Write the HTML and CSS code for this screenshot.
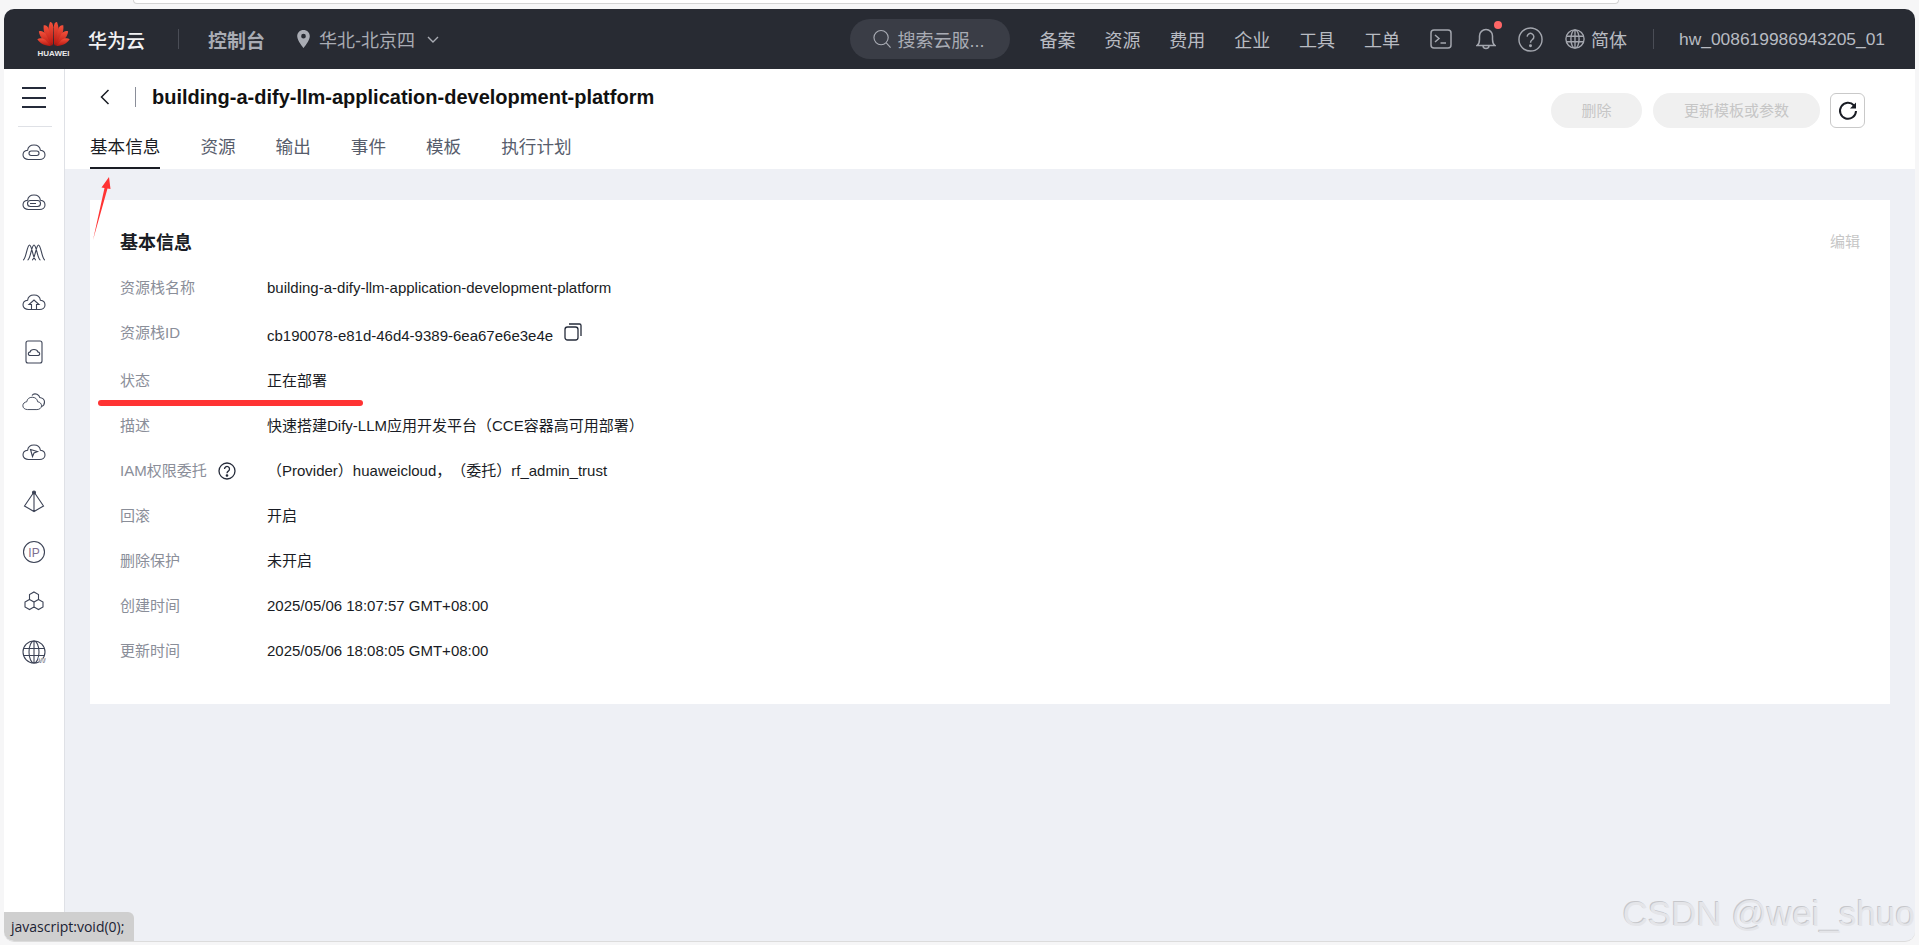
FILE: index.html
```html
<!DOCTYPE html>
<html lang="zh-CN">
<head>
  <meta charset="UTF-8" />
  <title>基本信息 - 资源栈</title>
  <link rel="stylesheet" href="styles.css">
</head>
<body>
  <svg class="defs" width="0" height="0">
    <symbol id="cloud" viewBox="0 0 24 24">
      <path d="M6.5 19.5C3.4 19.5 1 17.6 1 15s2-4.4 4.6-4.7C6 6.9 8.6 5 12 5s6 1.900 6.400 5.300C21 10.600 23 12.400 23 15s-2.400 4.500-5.500 4.500Z" />
    </symbol>
  </svg>

  <div class="topstrip"><div class="urlbar"></div></div>

  <div class="window">
    <header class="topnav">
      <div class="topnav-left">
        <div class="logo">
          <svg class="logo-mark" viewBox="0 0 32 24">
            <defs>
              <linearGradient id="petal" x1="0" y1="0" x2="0" y2="1">
                <stop offset="0" stop-color="#f5523c" />
                <stop offset="1" stop-color="#b5150f" />
              </linearGradient>
            </defs>
            <g fill="url(#petal)">
              <path d="M15.500 23.500C11 18 9.500 9 12.500 1 14.500 .5 15.500 3 15.800 6Z" />
              <path d="M16.500 23.500C21 18 22.500 9 19.500 1 17.500 .5 16.500 3 16.200 6Z" />
              <path d="M14.800 23.800C9.500 19 5.500 11 6.500 4 9 3.500 11 5.500 11.500 8Z" />
              <path d="M17.200 23.800C22.500 19 26.500 11 25.500 4 23 3.500 21 5.500 20.500 8Z" />
              <path d="M14.200 24C8 21 2.500 16 1.800 10 4 8.800 7 10.500 8.500 12.500Z" />
              <path d="M17.800 24C24 21 29.500 16 30.200 10 28 8.800 25 10.500 23.500 12.500Z" />
              <path d="M13.500 24.200C8 24 2.500 21.500 .3 17.500 2.500 15.800 6 16.500 8 18Z" />
              <path d="M18.500 24.200C24 24 29.500 21.500 31.700 17.500 29.500 15.800 26 16.500 24 18Z" />
            </g>
          </svg>
          <span class="logo-text">HUAWEI</span>
        </div>
        <span class="brand">华为云</span>
        <span class="nav-sep"></span>
        <span class="console">控制台</span>
        <span class="region">
          <svg class="pin" viewBox="0 0 14 20"><path d="M7 0C3 0 0 3 0 7c0 5 7 13 7 13s7-8 7-13c0-4-3-7-7-7Zm0 9.500A2.600 2.600 0 1 1 7 4.300a2.600 2.600 0 0 1 0 5.200Z" /></svg>
          华北-北京四
          <svg class="chevron" viewBox="0 0 12 7"><path d="M1 1l5 5 5-5" /></svg>
        </span>
      </div>
      <div class="topnav-right">
        <div class="search">
          <svg class="search-icon" viewBox="0 0 20 20"><circle cx="8.500" cy="8.500" r="7.500" /><path d="M14 14l4.500 5" /></svg>
          搜索云服...
        </div>
        <nav class="nav-links">
          <a>备案</a><a>资源</a><a>费用</a><a>企业</a><a>工具</a><a>工单</a>
        </nav>
        <svg class="tool terminal" viewBox="0 0 22 20"><rect x="1" y="1" width="20" height="18" rx="3" /><path d="M5 6l4 3.500L5 13M10.500 14H16" /></svg>
        <span class="bell">
          <svg class="tool bell-icon" viewBox="0 0 20 24"><path d="M1 18.500c2-1.500 2.500-3 2.500-6V9a6.500 6.500 0 0 1 13 0v3.500c0 3 .5 4.500 2.500 6ZM7 18.500a3 3 0 0 0 6 0" /></svg>
          <i class="badge"></i>
        </span>
        <svg class="tool help-icon" viewBox="0 0 26 26"><circle cx="13" cy="13" r="12" /><path d="M9.500 10a3.500 3.500 0 1 1 5.500 3c-1.500 1-2 1.800-2 3.500" /><circle cx="13" cy="19.500" r=".8" /></svg>
        <span class="lang">
          <svg class="tool globe" viewBox="0 0 22 22"><circle cx="11" cy="11" r="10" /><ellipse cx="11" cy="11" rx="4.500" ry="10" /><path d="M11 1v20M1.500 8h19M1.500 14h19" /></svg>
          简体
        </span>
        <span class="nav-sep"></span>
        <span class="user">hw_008619986943205_01</span>
      </div>
    </header>

    <div class="layout">
      <aside class="sidebar">
        <div class="hamburger"><span></span><span></span><span></span></div>
        <div class="side-divider"></div>
        <ul class="side-icons">
          <li><svg viewBox="0 0 24 24"><use href="#cloud" /><rect x="7" y="11" width="10" height="4.500" rx="2.200" /></svg></li>
          <li><svg viewBox="0 0 24 24"><use href="#cloud" /><rect x="5.500" y="10.500" width="13" height="6" rx="3" /><path d="M8 13.500h6" /></svg></li>
          <li><svg viewBox="0 0 24 24"><path d="M1 20C4 20 5 5 7.500 5S11 20 14 20M5.500 20C8.500 20 9.500 5 12 5S15.500 20 18.500 20M10 20C13 20 14 5 16.500 5S20 20 23 20" /></svg></li>
          <li><svg viewBox="0 0 24 24"><use href="#cloud" /><path d="M9.500 19v-4.500H7l5-4.500 5 4.500h-2.500V19" /></svg></li>
          <li><svg viewBox="0 0 24 24"><rect x="4" y="1" width="16" height="22" rx="2" /><path d="M8.500 15.500c-1.500 0-2.200-.8-2.200-1.800s.9-1.700 1.900-1.800C8.400 10.500 10 9.500 12 9.500s3.500 1 3.800 2.400c1 .1 1.900.8 1.900 1.800s-.8 1.800-2.200 1.800Z" /></svg></li>
          <li><svg viewBox="0 0 24 24"><path d="M10 5.500C11 4 13 3.500 15 4.200c1.500.6 2.500 2 2.800 3.300 2.500.4 4.700 2 4.700 4.500 0 2-1 3.800-3 4.500" /><use href="#cloud" transform="translate(0 3) scale(.85)" /></svg></li>
          <li><svg viewBox="0 0 24 24"><use href="#cloud" /><path d="M8.500 9.500l7 2-3.500 1.500-1.500 3.500Z" /></svg></li>
          <li><svg viewBox="0 0 24 24"><path d="M12 2L2.500 16 12 21.500 21.500 16ZM12 2v19.500" /><circle class="solid" cx="12" cy="2.500" r="1.500" /></svg></li>
          <li><svg viewBox="0 0 24 24"><circle cx="12" cy="12" r="10.500" /><text class="ip-text" x="12" y="16.500">IP</text></svg></li>
          <li><svg viewBox="0 0 24 24"><path d="M12 2l4.500 2.500v5L12 12 7.500 9.500v-5ZM7.500 9.500l4.500 2.500v5l-4.500 2.500L3 17v-5ZM16.500 9.500L21 12v5l-4.500 2.500L12 17v-5Z" /></svg></li>
          <li><svg viewBox="0 0 24 24"><circle cx="12" cy="12" r="11" /><ellipse cx="12" cy="12" rx="5" ry="11" /><path d="M12 1v22M1.500 8.500h21M1.500 15.500h21" /><text class="w-text" x="20" y="23">W</text></svg></li>
        </ul>
      </aside>

      <main class="main">
        <div class="page-head">
          <div class="page-head-left">
            <div class="title-row">
              <svg class="back" viewBox="0 0 10 16"><path d="M8.500 1L1.500 8l7 7" /></svg>
              <span class="title-sep"></span>
              <h1 class="title">building-a-dify-llm-application-development-platform</h1>
            </div>
            <div class="tabs">
              <a class="tab active">基本信息</a>
              <a class="tab">资源</a>
              <a class="tab">输出</a>
              <a class="tab">事件</a>
              <a class="tab">模板</a>
              <a class="tab">执行计划</a>
            </div>
          </div>
          <div class="actions">
            <button class="btn btn-small">删除</button>
            <button class="btn btn-wide">更新模板或参数</button>
            <button class="btn-refresh">
              <svg viewBox="0 0 20 20"><path d="M16 4.500A8 8 0 1 0 18 10" /><path class="solid" d="M18 1.500v6h-6Z" /></svg>
            </button>
          </div>
        </div>

        <section class="card">
          <div class="card-head">
            <h2 class="card-title">基本信息</h2>
            <a class="edit">编辑</a>
          </div>
          <div class="row"><span class="label">资源栈名称</span><span class="value">building-a-dify-llm-application-development-platform</span></div>
          <div class="row row-id">
            <span class="label">资源栈ID</span>
            <span class="value value-id">cb190078-e81d-46d4-9389-6ea67e6e3e4e
              <svg class="copy" viewBox="0 0 18 18"><rect x="1" y="4" width="13" height="13" rx="2.500" /><path d="M5 1h10.500A1.500 1.500 0 0 1 17 2.500V13" /></svg>
            </span>
          </div>
          <div class="row"><span class="label">状态</span><span class="value">正在部署</span></div>
          <div class="row"><span class="label">描述</span><span class="value">快速搭建Dify-LLM应用开发平台（CCE容器高可用部署）</span></div>
          <div class="row">
            <span class="label">IAM权限委托
              <svg class="q" viewBox="0 0 18 18"><circle cx="9" cy="9" r="8" /><path d="M6.500 7a2.500 2.500 0 1 1 3.800 2.100C9.300 9.800 9 10.300 9 11.300" /><circle class="solid" cx="9" cy="13.500" r=".7" /></svg>
            </span>
            <span class="value">（Provider）huaweicloud，（委托）rf_admin_trust</span>
          </div>
          <div class="row"><span class="label">回滚</span><span class="value">开启</span></div>
          <div class="row"><span class="label">删除保护</span><span class="value">未开启</span></div>
          <div class="row"><span class="label">创建时间</span><span class="value">2025/05/06 18:07:57 GMT+08:00</span></div>
          <div class="row"><span class="label">更新时间</span><span class="value">2025/05/06 18:08:05 GMT+08:00</span></div>
        </section>
      </main>
    </div>

    <div class="statusbar">javascript:void(0);</div>
    <div class="watermark">CSDN @wei_shuo</div>
  </div>

  <!-- red marks drawn on top of the screenshot -->
  <svg class="mark-arrow" viewBox="0 0 24 70"><path d="M1 66L12.500 14 9.500 13.500 17 3 18.500 15 15.500 14.500Z" /></svg>
  <div class="mark-line"></div>
</body>
</html>
```

FILE: styles.css
```css
* {
  box-sizing: border-box;
}

html, body {
  height: 100%;
}

body {
  margin: 0;
  position: relative;
  overflow: hidden;
  background: #f6f6f7;
  font-family: "Liberation Sans", "Noto Sans CJK SC", sans-serif;
  color: #191c24;
  text-spacing-trim: space-all;
}

.defs {
  position: absolute;
}

.topstrip {
  height: 9px;
  padding: 0 300px 0 133px;
}

.urlbar {
  height: 4px;
  background: #fff;
  border: 1px solid #d4d4d4;
  border-top: none;
  border-radius: 0 0 8px 8px;
}

.window {
  position: relative;
  height: 933px;
  margin: 0 4px;
  display: flex;
  flex-direction: column;
  overflow: hidden;
  background: #eef0f5;
  border-bottom: 1px solid #dcdcdc;
  border-radius: 10px;
}

/* top bar */
.topnav {
  height: 60px;
  flex: none;
  display: flex;
  align-items: center;
  justify-content: space-between;
  padding: 0 30px 0 33px;
  background: #282b33;
  color: #b8bbc2;
}

.topnav-left, .topnav-right {
  display: flex;
  align-items: center;
}

.logo {
  width: 33px;
  display: flex;
  flex-direction: column;
  align-items: center;
  margin-top: 1px;
}

.logo-mark {
  width: 33px;
  height: 25px;
}

.logo-text {
  margin-top: 3px;
  font-size: 8px;
  line-height: 9px;
  font-weight: bold;
  color: #e8e8ea;
}

.brand {
  margin-left: 18px;
  font-size: 19px;
  font-weight: 500;
  color: #f2f2f4;
}

.nav-sep {
  width: 1px;
  height: 20px;
  background: #4a4d56;
}

.topnav-left .nav-sep {
  margin: 0 29px 0 33px;
}

.console {
  font-size: 19px;
  font-weight: bold;
  color: #a9acb4;
}

.region {
  margin-left: 32px;
  display: flex;
  align-items: center;
  font-size: 18px;
  color: #a9acb4;
}

.pin {
  width: 13px;
  height: 18px;
  margin-right: 9px;
  fill: #a9acb4;
}

.chevron {
  width: 12px;
  height: 7px;
  margin-left: 12px;
  fill: none;
  stroke: #a9acb4;
  stroke-width: 1.4;
}

.search {
  width: 160px;
  height: 40px;
  margin-right: 30px;
  padding-left: 23px;
  display: flex;
  align-items: center;
  border-radius: 20px;
  background: #3a3d46;
  font-size: 18px;
  color: #a9acb4;
}

.search-icon {
  width: 19px;
  height: 20px;
  margin-right: 6px;
  fill: none;
  stroke: #a9acb4;
  stroke-width: 1.2;
}

.nav-links {
  display: flex;
  gap: 28.900px;
  font-size: 18px;
}

.tool {
  fill: none;
  stroke: #a3a6ae;
  stroke-width: 1.500;
}

.terminal {
  width: 22px;
  height: 20px;
  margin-left: 30px;
}

.bell {
  position: relative;
  margin-left: 24px;
  display: flex;
}

.bell-icon {
  width: 20px;
  height: 24px;
}

.badge {
  position: absolute;
  top: -6px;
  right: -6px;
  width: 8px;
  height: 8px;
  border-radius: 50%;
  background: #f66;
}

.help-icon {
  width: 25px;
  height: 25px;
  margin-left: 22px;
}

.lang {
  margin-left: 22px;
  display: flex;
  align-items: center;
  font-size: 18px;
}

.globe {
  width: 20px;
  height: 20px;
  margin-right: 6px;
}

.topnav-right .nav-sep {
  margin: 0 25px 0 26px;
}

.user {
  font-size: 17.400px;
}

/* sidebar and content */
.layout {
  flex: 1;
  display: flex;
  min-height: 0;
}

.sidebar {
  width: 61px;
  flex: none;
  padding-left: 1px;
  background: #fff;
  border-right: 1px solid #dfe1e6;
}

.hamburger {
  display: flex;
  flex-direction: column;
  gap: 7.500px;
  width: 24px;
  margin: 18px 0 0 17px;
}

.hamburger span {
  height: 2px;
  background: #252b3a;
}

.side-divider {
  width: 34px;
  height: 1px;
  margin: 18px 0 0 13px;
  background: #dfe1e6;
}

.side-icons {
  list-style: none;
  margin: 0;
  padding: 0;
}

.side-icons li {
  height: 50px;
  display: flex;
  align-items: center;
  padding-left: 17px;
}

.side-icons svg {
  width: 24px;
  height: 24px;
  fill: none;
  stroke: #3c4356;
  stroke-width: 1.100;
}

.side-icons .solid {
  fill: #3c4356;
}

.ip-text {
  font-size: 12px;
  text-anchor: middle;
  fill: #7d6f8f;
  stroke: none;
}

.w-text {
  font-size: 8px;
  font-weight: bold;
  text-anchor: middle;
  fill: #3c4356;
  stroke: #fff;
  stroke-width: .4;
}

.main {
  flex: 1;
  min-width: 0;
}

.page-head {
  height: 100px;
  display: flex;
  justify-content: space-between;
  padding: 0 50px 0 25px;
  background: #fff;
}

.title-row {
  height: 56px;
  display: flex;
  align-items: center;
}

.back {
  width: 10px;
  height: 16px;
  margin-left: 10px;
  fill: none;
  stroke: #191c24;
  stroke-width: 1.500;
}

.title-sep {
  width: 1px;
  height: 20px;
  margin: 0 16px 0 25px;
  background: #8a8e99;
}

.title {
  margin: 0;
  font-size: 20px;
  font-weight: bold;
  color: #111;
}

.tabs {
  display: flex;
  gap: 40px;
}

.tab {
  height: 44px;
  line-height: 44px;
  font-size: 17.600px;
  color: #575d6c;
  border-bottom: 2px solid transparent;
}

.tab.active {
  color: #191c24;
  border-bottom-color: #191c24;
}

.actions {
  display: flex;
  gap: 11px;
  margin-top: 24px;
  height: 35px;
}

.btn {
  height: 35px;
  padding: 0 0 3px;
  border: none;
  border-radius: 18px;
  background: #f0f0f0;
  color: #c6c6c6;
  font: inherit;
  font-size: 15px;
}

.btn-small {
  width: 91px;
}

.btn-wide {
  width: 167px;
}

.btn-refresh {
  width: 35px;
  height: 35px;
  margin-left: -1px;
  padding: 0;
  display: flex;
  align-items: center;
  justify-content: center;
  border: 1px solid #c9c9c9;
  border-radius: 6px;
  background: #fff;
}

.btn-refresh svg {
  width: 20px;
  height: 20px;
  fill: none;
  stroke: #191c24;
  stroke-width: 2;
}

.btn-refresh .solid {
  fill: #191c24;
  stroke: none;
}

.card {
  margin: 31px 25px 0 25px;
  padding: 27px 30px 31px;
  background: #fff;
}

.card-head {
  height: 28px;
  margin-bottom: 10px;
  display: flex;
  align-items: center;
  justify-content: space-between;
}

.card-title {
  margin: 0;
  font-size: 18px;
  font-weight: bold;
  color: #191c24;
}

.edit {
  margin-top: -2px;
  font-size: 15px;
  color: #c6c6c6;
}

.row {
  height: 45px;
  display: flex;
  font-size: 15px;
  line-height: 45px;
}

.row-id {
  height: 48px;
}

.label {
  width: 147px;
  flex: none;
  display: flex;
  align-items: center;
  height: 45px;
  color: #8a8e99;
}

.value {
  color: #191c24;
}

.value-id {
  padding-top: 3px;
  display: flex;
  align-items: flex-start;
}

.copy {
  width: 18px;
  height: 18px;
  margin: 10px 0 0 11px;
  fill: none;
  stroke: #252b3a;
  stroke-width: 1.300;
}

.q {
  width: 18px;
  height: 18px;
  margin-left: 11px;
  fill: none;
  stroke: #252b3a;
  stroke-width: 1.300;
}

.q .solid {
  fill: #252b3a;
}

/* overlays */
.statusbar {
  position: absolute;
  left: 0;
  bottom: 0;
  width: 130px;
  height: 29px;
  padding-left: 7px;
  border-radius: 0 6px 0 0;
  background: #cfcfcf;
  font-family: "Open Sans", sans-serif;
  font-size: 14px;
  line-height: 29px;
  color: #1b2233;
}

.watermark {
  position: absolute;
  right: 0;
  bottom: 7px;
  font-size: 35px;
  line-height: 40px;
  white-space: nowrap;
  color: #e4e5e9;
  text-shadow: -1px -1px 0 #c6c7cb;
}

.mark-arrow {
  position: absolute;
  left: 92px;
  top: 174px;
  width: 24px;
  height: 70px;
  fill: #f33;
}

.mark-line {
  position: absolute;
  left: 98px;
  top: 400px;
  width: 265px;
  height: 6px;
  border-radius: 3px;
  background: #f33;
}
```
